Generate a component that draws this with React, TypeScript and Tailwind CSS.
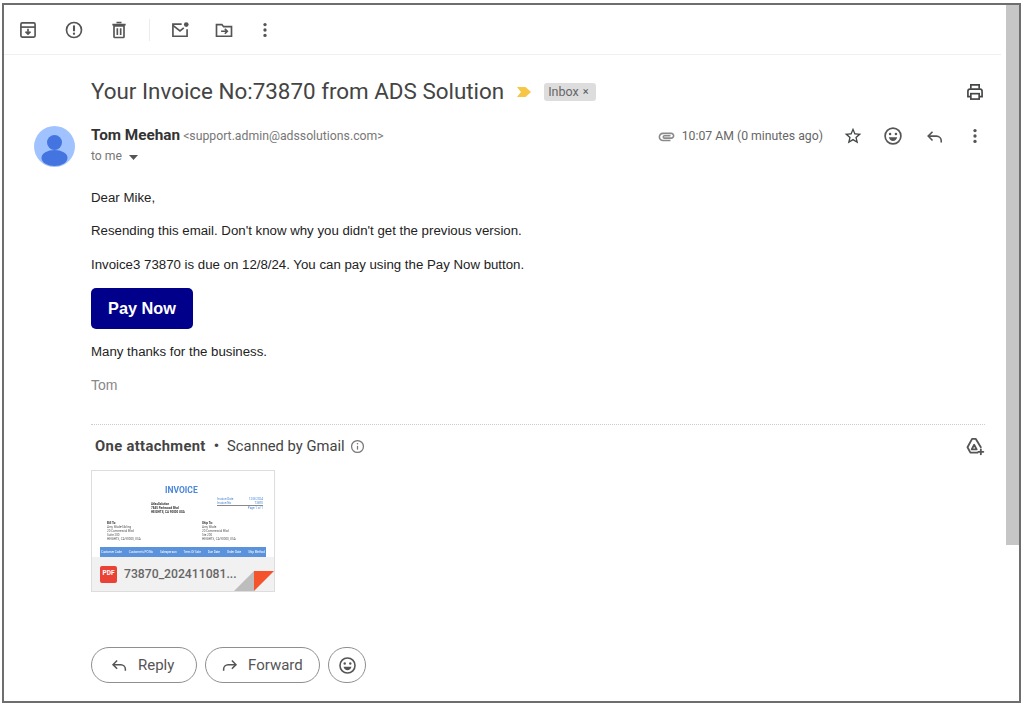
import type { ReactNode } from 'react';

const BODY_FONT = "font-['Liberation_Sans',Arial,sans-serif]";

function Icon({ size = 20, className = '', children }: { size?: number; className?: string; children: ReactNode }) {
  return (
    <svg width={size} height={size} viewBox="0 0 24 24" fill="none" stroke="currentColor" strokeWidth={2} className={`shrink-0 ${className}`}>
      {children}
    </svg>
  );
}

const ReplyGlyph = () => (
  <>
    <path d="M9.500 6 4 11.500 9.500 17" />
    <path d="M4 11.500h10.500a6 6 0 0 1 6 6v2" />
  </>
);

const ForwardGlyph = () => (
  <>
    <path d="M14.500 6 20 11.500 14.500 17" />
    <path d="M20 11.500H9.500a6 6 0 0 0-6 6v2" />
  </>
);

const Smiley = () => (
  <>
    <circle cx="12" cy="12" r="9.500" />
    <circle cx="8.500" cy="9.500" r="1.500" fill="currentColor" stroke="none" />
    <circle cx="15.500" cy="9.500" r="1.500" fill="currentColor" stroke="none" />
    <path d="M7 13.500h10c-.6 2.800-2.600 4.500-5 4.500s-4.400-1.700-5-4.500z" fill="currentColor" stroke="none" />
  </>
);

const MoreVert = () => (
  <>
    <circle cx="12" cy="5.500" r="2" fill="currentColor" stroke="none" />
    <circle cx="12" cy="12" r="2" fill="currentColor" stroke="none" />
    <circle cx="12" cy="18.500" r="2" fill="currentColor" stroke="none" />
  </>
);

function Toolbar() {
  return (
    <div className="flex h-[50px] w-[997px] items-center border-b border-[#efefef] pl-[14px] text-[#555555]">
      <Icon>
        <rect x="3.500" y="3.500" width="17" height="17" rx="1.500" />
        <path d="M3.500 8.500h17" />
        <path d="M12 10.500v6M9 14l3 3 3-3" />
      </Icon>
      <Icon className="ml-[26px]">
        <circle cx="12" cy="12" r="9" />
        <path d="M12 6.500v7" strokeWidth={2.500} />
        <circle cx="12" cy="16.500" r="1.400" fill="currentColor" stroke="none" />
      </Icon>
      <Icon className="ml-[25px]">
        <path d="M6 7h12v13a1 1 0 0 1-1 1H7a1 1 0 0 1-1-1zM4 5.500h16M9 3h6" />
        <path d="M10 10v8M14 10v8" />
      </Icon>
      <div className="ml-[20px] h-[22px] w-px bg-[#ececec]" />
      <Icon className="ml-[20px]">
        <path d="M14 5H3.500v14.500h17V11" />
        <path d="M3.500 6.500 12 13l4.500-3.500" />
        <circle cx="19.500" cy="5.500" r="2.800" fill="currentColor" stroke="none" />
      </Icon>
      <Icon className="ml-[24px]">
        <path d="M3 5.500h6.500l2 2.500H21v11.500H3z" />
        <path d="M8.500 13.500h7M13 10.500l3 3-3 3" />
      </Icon>
      <Icon className="ml-[21px]">
        <MoreVert />
      </Icon>
    </div>
  );
}

function SubjectRow() {
  return (
    <div className="mt-[20px] flex h-[34px] items-center pl-[87px] pr-[21px]">
      <h1 className="-mt-[2px] font-['Roboto',Arial,sans-serif] text-[22.400px] leading-none text-[#444444]">
        Your Invoice No:73870 from ADS Solution
      </h1>
      <svg width="14" height="12" viewBox="0 0 14 12" className="ml-[13px]">
        <path d="M0 1h8.500L14 6l-5.500 5H0l4-5z" fill="#f6c644" />
      </svg>
      <span className="ml-[13px] flex h-[18px] w-[52px] items-center rounded-[3px] bg-[#dddddd] pl-[4px] font-['Roboto',Arial,sans-serif] text-[12.500px] text-[#666666]">
        Inbox
        <span className="ml-[4px] text-[11px] text-[#555555]">×</span>
      </span>
      <Icon className="ml-auto text-[#444746]">
        <path d="M7 8V3.500h10V8" />
        <path d="M7 17.500H3.500V11a2.500 2.500 0 0 1 2.500-2.500h12a2.500 2.500 0 0 1 2.500 2.500v6.500H17" />
        <rect x="7" y="14" width="10" height="6.500" />
      </Icon>
    </div>
  );
}

function SenderRow() {
  return (
    <div className="mt-[17px] flex h-[41px] pl-[30px] pr-[21px]">
      <svg width="41" height="41" viewBox="0 0 41 41" className="shrink-0">
        <circle cx="20.500" cy="20.500" r="20.500" fill="#a0c3ff" />
        <circle cx="20.500" cy="16.500" r="7.500" fill="#4374e0" />
        <ellipse cx="20.500" cy="32" rx="13" ry="8" fill="#4374e0" />
      </svg>
      <div className="ml-[16px] font-['Roboto',Arial,sans-serif]">
        <div className="-mt-[2px] flex h-[20px] items-baseline">
          <span className="text-[15.300px] font-bold text-[#333333]">Tom Meehan</span>
          <span className="ml-[3px] text-[12.250px] text-[#777777]">&lt;support.admin@adssolutions.com&gt;</span>
        </div>
        <div className="mt-[3px] flex items-center text-[12.200px] text-[#777777]">
          to me
          <svg width="9" height="5" viewBox="0 0 9 5" className="ml-[7px] mt-[2px]">
            <path d="M0 0h9L4.500 5z" fill="#555555" />
          </svg>
        </div>
      </div>
      <div className="ml-auto flex h-[20px] items-center font-['Roboto',Arial,sans-serif] text-[12.250px] text-[#666666]">
        <svg width="19" height="19" viewBox="0 0 24 24" fill="#8a8a8a">
          <path d="M2 12.500C2 9.460 4.460 7 7.500 7H18c2.210 0 4 1.790 4 4s-1.790 4-4 4H9.500C8.120 15 7 13.880 7 12.500S8.120 10 9.500 10H17v2H9.410c-.55 0-.55 1 0 1H18c1.100 0 2-.9 2-2s-.9-2-2-2H7.500C5.570 9 4 10.570 4 12.500S5.570 16 7.500 16H17v2H7.500C4.460 18 2 15.540 2 12.500z" />
        </svg>
        <span className="ml-[6px]">10:07 AM (0 minutes ago)</span>
        <svg width="20" height="20" viewBox="0 0 24 24" fill="#444746" className="ml-[20px]">
          <path d="M22 9.240l-7.190-.62L12 2 9.190 8.630 2 9.240l5.460 4.730L5.820 21 12 17.270 18.180 21l-1.630-7.030L22 9.240zM12 15.400l-3.760 2.270 1-4.280-3.320-2.880 4.380-.38L12 6.100l1.710 4.040 4.380.38-3.320 2.880 1 4.280L12 15.400z" />
        </svg>
        <Icon className="ml-[20px] text-[#555555]">
          <Smiley />
        </Icon>
        <Icon className="ml-[22px] text-[#555555]" size={19}>
          <ReplyGlyph />
        </Icon>
        <Icon className="ml-[21px] text-[#555555]">
          <MoreVert />
        </Icon>
      </div>
    </div>
  );
}

function MessageBody() {
  return (
    <div className={`mt-[23px] pl-[87px] text-[13.250px] text-[#222222] ${BODY_FONT}`}>
      <p className="h-[16px] leading-[16px]">Dear Mike,</p>
      <p className="mt-[17px] h-[16px] leading-[16px]">Resending this email. Don't know why you didn't get the previous version.</p>
      <p className="mt-[18px] h-[16px] leading-[16px]">Invoice3 73870 is due on 12/8/24. You can pay using the Pay Now button.</p>
      <button type="button" className="mt-[15px] block h-[41px] w-[102px] rounded-[5px] bg-[#00008b] text-[16.300px] font-bold text-white">
        Pay Now
      </button>
      <p className="mt-[15px] h-[16px] leading-[16px]">Many thanks for the business.</p>
      <p className="mt-[17px] h-[16px] text-[14px] leading-[16px] text-[#888888]">Tom</p>
    </div>
  );
}

function InvoiceThumb() {
  return (
    <div className="h-[86px] overflow-hidden pl-[8px] pr-[8px] pt-[15px] text-[3px] leading-[4px] text-[#555555] blur-[0.3px]">
      <div className="pl-[65px] font-['Roboto',Arial,sans-serif] text-[8.500px] font-bold leading-[9px] text-[#4a86d8]">INVOICE</div>
      <div className="mt-[2px] flex justify-between pl-[51px] pr-[3px]">
        <div className="mt-[5px] font-bold text-[#333333]">
          <div>AtlasSolution</div>
          <div>7845 Parkwood Blvd</div>
          <div>HEIGHTS, CA 90000 USA</div>
        </div>
        <div className="w-[46px] text-[#4a86d8]">
          <div className="flex justify-between"><span>Invoice Date</span><span>12/8/2024</span></div>
          <div className="flex justify-between border-b border-[#888888]"><span>Invoice No</span><span>73870</span></div>
          <div className="text-right">Page 1 of 1</div>
        </div>
      </div>
      <div className="mt-[7px] grid grid-cols-[95px_1fr] pl-[7px]">
        <div>
          <div className="font-bold text-[#333333]">Bill To:</div>
          <div>Amy Wade-Sibling</div>
          <div>20 Commercial Blvd</div>
          <div>Suite 200</div>
          <div>HEIGHTS, CA 90000, USA</div>
        </div>
        <div>
          <div className="font-bold text-[#333333]">Ship To:</div>
          <div>Amy Wade</div>
          <div>20 Commercial Blvd</div>
          <div>Ste 200</div>
          <div>HEIGHTS, CA 90000, USA</div>
        </div>
      </div>
      <div className="mt-[6px] flex h-[10px] items-center justify-between bg-[#5b92dc] px-[1px] text-white">
        <span>Customer Code</span>
        <span>Customer's PO No</span>
        <span>Salesperson</span>
        <span>Term Of Sale</span>
        <span>Due Date</span>
        <span>Order Date</span>
        <span>Ship Method</span>
      </div>
    </div>
  );
}

function Attachments() {
  return (
    <div className="pl-[87px] pr-[21px] font-['Roboto',Arial,sans-serif]">
      <div className="mt-[31px] border-t border-dotted border-[#cccccc]" />
      <div className="mt-[11px] flex h-[20px] items-center pl-[4px] text-[14.750px] text-[#444444]">
        <span className="font-bold tracking-[0.35px]">One attachment</span>
        <span className="ml-[8px] font-bold">•</span>
        <span className="ml-[8px]">Scanned by Gmail</span>
        <Icon size={15} className="ml-[5px] text-[#777777]">
          <circle cx="12" cy="12" r="9.500" />
          <path d="M12 11v6" />
          <circle cx="12" cy="7.500" r="1.300" fill="currentColor" stroke="none" />
        </Icon>
        <svg width="20" height="20" viewBox="0 0 24 24" fill="none" stroke="#555555" strokeWidth={2.200} strokeLinejoin="round" strokeLinecap="round" className="ml-auto">
          <path d="M8.500 3.500h4.500L19 13.500M8.500 3.500 3 13.500 6.500 20H15" />
          <path d="M11 10.500 14 16H8z" />
          <path d="M19 16v6M16 19h6" />
        </svg>
      </div>
      <div className="relative mt-[14px] h-[122px] w-[184px] overflow-hidden border border-[#dddddd] bg-white">
        <InvoiceThumb />
        <div className="flex h-[34px] items-center bg-[#f1f1f1] pl-[8px]">
          <span className="flex h-[17px] w-[17px] items-center justify-center rounded-[2px] bg-[#ea4335] text-[6.500px] font-bold text-white">PDF</span>
          <span className="ml-[7px] text-[12.200px] font-medium text-[#666666]">73870_202411081...</span>
        </div>
        <svg width="40" height="20" viewBox="0 0 40 20" className="absolute bottom-0 right-0">
          <path d="M0 20 20 0v20z" fill="#bdbdbd" />
          <path d="M20 0h20L20 20z" fill="#f4532c" />
        </svg>
      </div>
    </div>
  );
}

function ReplyBar() {
  const pill = "flex h-[36px] items-center rounded-full border border-[#8f8f8f] font-['Roboto',Arial,sans-serif] text-[15px] text-[#555555]";
  return (
    <div className="mt-[55px] flex items-center pl-[87px]">
      <button type="button" className={`${pill} w-[106px] pl-[18px]`}>
        <Icon size={18} className="text-[#555555]">
          <ReplyGlyph />
        </Icon>
        <span className="ml-[10px]">Reply</span>
      </button>
      <button type="button" className={`${pill} ml-[8px] w-[115px] pl-[15px]`}>
        <Icon size={18} className="text-[#555555]">
          <ForwardGlyph />
        </Icon>
        <span className="ml-[9px]">Forward</span>
      </button>
      <button type="button" className={`${pill} ml-[8px] w-[38px] justify-center`}>
        <Icon size={19} className="text-[#555555]">
          <Smiley />
        </Icon>
      </button>
    </div>
  );
}

export default function App() {
  return (
    <div className="h-[708px] w-[1024px] overflow-hidden bg-white pl-[2px] pt-[3px]">
      <div className="flex h-[700px] w-[1019px] border-2 border-[#6e6e6e]">
        <main className="w-[1002px]">
          <Toolbar />
          <SubjectRow />
          <SenderRow />
          <MessageBody />
          <Attachments />
          <ReplyBar />
        </main>
        <div className="h-[540px] w-[13px] bg-[#c6c6c6]" />
      </div>
    </div>
  );
}
